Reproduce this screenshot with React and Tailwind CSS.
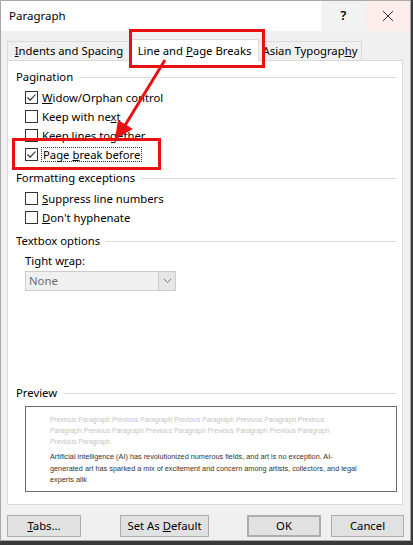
import { useState } from 'react';

const Check = ({ checked }) => (
  <span className="w-[13px] h-[13px] border border-[#333333] bg-white flex items-center justify-center shrink-0">
    {checked && (
      <svg width="11" height="11" viewBox="0 0 11 11">
        <path d="M1.5 5.5 L4.2 8.2 L9.5 2.5" fill="none" stroke="#222" strokeWidth="1.1" />
      </svg>
    )}
  </span>
);

const Row = ({ checked, children }) => (
  <div className="h-[19px] flex items-center ml-[9px] gap-[4px]">
    <Check checked={checked} />
    <span className="leading-none">{children}</span>
  </div>
);

const Header = ({ title, className = '' }) => (
  <div className={`h-[16px] flex items-center gap-[6px] ${className}`}>
    <span className="leading-none">{title}</span>
    <span className="flex-1 h-px bg-[#dcdcdc]"></span>
  </div>
);

const Btn = ({ children, className = '' }) => (
  <button className={`h-[22px] bg-[#e1e1e1] border border-[#adadad] flex items-center justify-center leading-none ${className}`}>
    {children}
  </button>
);

const App = () => {
  const [tab] = useState('breaks');

  return (
    <div className="w-[413px] h-[545px] bg-[#3a3a3a] font-['Noto_Sans',sans-serif] text-[11.3px] text-black overflow-hidden">
      <div className="relative w-[411px] h-[541px] border border-[#a8a8a8] bg-[#f0f0f0] flex flex-col">
        {/* Title bar */}
        <div className="h-[30px] bg-white flex items-stretch">
          <div className="flex-1 flex items-center pl-[8px] text-[11.5px]">Paragraph</div>
          <div className="w-[45px] bg-[#f2f2f2] flex items-center justify-center font-semibold text-[12.5px]">?</div>
          <div className="w-[44px] bg-[#fcecec] flex items-center justify-center">
            <svg width="12" height="12" viewBox="0 0 12 12">
              <path d="M1 1 L11 11 M11 1 L1 11" stroke="#333" strokeWidth="1" />
            </svg>
          </div>
        </div>

        {/* Tabs */}
        <div className="flex items-end pl-[6px] mt-[7px] h-[22px]">
          <div className="w-[124px] h-[19px] border border-b-0 border-[#d9d9d9] bg-[#f0f0f0] flex items-center justify-center leading-none">
            <span><u>I</u>ndents and Spacing</span>
          </div>
          <div className="w-[129px] h-[22px] border border-b-0 border-[#d9d9d9] bg-white flex items-center justify-center leading-none relative z-10 mb-[-1px] -mx-px">
            <span>Line and <u>P</u>age Breaks</span>
          </div>
          <div className="w-[104px] h-[19px] border border-b-0 border-[#d9d9d9] bg-[#f0f0f0] flex items-center justify-center leading-none">
            <span>Asian Typograp<u>h</u>y</span>
          </div>
        </div>

        {/* Panel */}
        <div className="ml-[6px] w-[396px] h-[445px] border border-[#d9d9d9] bg-white pl-[8px] pr-[5px] pt-[8px]">
          <Header title="Pagination" />
          <div className="mt-[3px]">
            <Row checked><u>W</u>idow/Orphan control</Row>
            <Row>Keep with ne<u>x</u>t</Row>
            <Row>Keep lines together</Row>
            <div className="h-[19px] flex items-center ml-[9px] gap-[3px]">
              <Check checked />
              <span className="leading-none border border-dotted border-[#333] px-[1px] py-[1px]">Page <u>b</u>reak before</span>
            </div>
          </div>

          <Header title="Formatting exceptions" className="mt-[6px]" />
          <div className="mt-[3px]">
            <Row><u>S</u>uppress line numbers</Row>
            <Row><u>D</u>on't hyphenate</Row>
          </div>

          <Header title="Textbox options" className="mt-[6px]" />
          <div className="ml-[9px] mt-[4px] h-[16px] flex items-center leading-none">Tight w<u>r</u>ap:</div>
          <div className="ml-[9px] mt-[2px] w-[151px] h-[20px] border border-[#cccccc] bg-[#f0f0f0] flex">
            <span className="flex-1 flex items-center pl-[3px] text-[#6d6d6d] leading-none">None</span>
            <span className="w-[17px] border-l border-[#cccccc] bg-[#e6e6e6] flex items-center justify-center">
              <svg width="9" height="6" viewBox="0 0 9 6">
                <path d="M1 1 L4.5 4.5 L8 1" fill="none" stroke="#777" strokeWidth="1" />
              </svg>
            </span>
          </div>

          <Header title="Preview" className="mt-[94px]" />
          <div className="ml-[9px] mt-[5px] h-[86px] border border-[#6b6b6b] pl-[24px] pt-[7px] font-['Liberation_Sans',Arial,sans-serif]">
            <div className="w-[284px] text-[#c4c4c4] text-[6.8px] leading-[11px]">
              Previous Paragraph Previous Paragraph Previous Paragraph Previous Paragraph Previous Paragraph Previous Paragraph Previous Paragraph Previous Paragraph Previous Paragraph Previous Paragraph
            </div>
            <div className="w-[310px] text-[#333333] text-[7.3px] leading-[11.5px] mt-[4px]">
              Artificial intelligence (AI) has revolutionized numerous fields, and art is no exception. AI-generated art has sparked a mix of excitement and concern among artists, collectors, and legal experts alik
            </div>
          </div>
        </div>

        {/* Buttons */}
        <div className="flex pl-[6px] mt-[10px]">
          <Btn className="w-[74px]"><span><u>T</u>abs...</span></Btn>
          <Btn className="w-[89px] ml-[39px]"><span>Set As <u>D</u>efault</span></Btn>
          <Btn className="w-[74px] ml-[38px] border-[#0078d7] border-2">OK</Btn>
          <Btn className="w-[73px] ml-[10px]">Cancel</Btn>
        </div>

        {/* Annotations */}
        <div className="absolute left-[128px] top-[28px] w-[136px] h-[39px] border-[3px] border-[#e81010] z-20"></div>
        <div className="absolute left-[11px] top-[137px] w-[149px] h-[32px] border-[3px] border-[#e81010] z-20"></div>
        <svg className="absolute left-0 top-0 z-20 pointer-events-none" width="411" height="541">
          <line x1="164" y1="59" x2="123" y2="126" stroke="#e81010" strokeWidth="3" />
          <polygon points="114,138 117,119 132,128" fill="#e81010" />
        </svg>
      </div>
    </div>
  );
};

export default App;
